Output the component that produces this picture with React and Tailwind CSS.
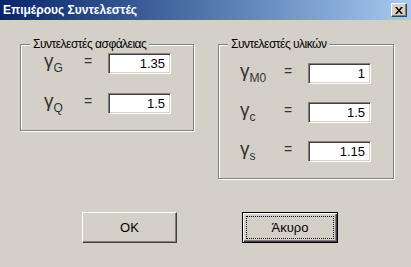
import React from 'react';

const font = { fontFamily: '"Liberation Sans", Arial, sans-serif' };

function Field({ value }) {
  return (
    <div className="w-[63px] h-[21px] bg-white border border-t-[#808080] border-l-[#808080] border-r-white border-b-white shadow-[inset_1px_1px_0_#404040,inset_-1px_-1px_0_#d4d0c8] flex items-center justify-end pr-[5px] text-[13px] text-black">
      {value}
    </div>
  );
}

function Row({ sub, value, wide }) {
  return (
    <div className="flex items-start h-[21px]">
      <div className={`${wide ? 'w-[44px]' : 'w-[40px]'} flex items-end text-[#333] leading-none mt-[-2px]`}>
        <span className="text-[19px]">γ</span>
        <span className="text-[12px] mb-[-4px]">{sub}</span>
      </div>
      <div className="w-[24px] text-[14px] text-[#333] leading-none pt-[1px]">=</div>
      <Field value={value} />
    </div>
  );
}

function Group({ title, children, className }) {
  return (
    <div className={`relative border border-[#808080] shadow-[inset_1px_1px_0_#fff,1px_1px_0_#fff] ${className}`}>
      <div className="absolute top-[-9px] left-[9px] px-[3px] bg-[#d4d0c8] text-[12px] tracking-[-0.5px] leading-[16px] text-black">
        {title}
      </div>
      {children}
    </div>
  );
}

export default function App() {
  return (
    <div className="w-[411px] h-[267px] bg-[#d4d0c8] flex flex-col overflow-hidden" style={font}>
      <div className="h-[20px] flex items-center justify-between pl-[3px] pr-[4px] bg-gradient-to-r from-[#0a246a] to-[#a6caf0]">
        <span className="text-white font-bold text-[12px]">Επιμέρους Συντελεστές</span>
        <div className="w-[16px] h-[14px] bg-[#d4d0c8] border border-t-white border-l-white border-r-[#404040] border-b-[#404040] shadow-[inset_-1px_-1px_0_#808080] flex items-center justify-center">
          <svg width="8" height="7" viewBox="0 0 8 7">
            <path d="M0 0h2l2 2.5L6 0h2L5 3.5 8 7H6L4 4.5 2 7H0l3-3.5z" fill="#000" />
          </svg>
        </div>
      </div>

      <div className="flex items-start pt-[24px] pl-[20px] gap-[24px]">
        <Group title="Συντελεστές ασφάλειας" className="w-[174px] h-[87px] pl-[23px] pt-[8px] flex flex-col gap-[19px]">
          <Row sub="G" value="1.35" />
          <Row sub="Q" value="1.5" />
        </Group>
        <Group title="Συντελεστές υλικών" className="w-[176px] h-[135px] pl-[21px] pt-[18px] flex flex-col gap-[18px]">
          <Row sub="M0" value="1" wide />
          <Row sub="c" value="1.5" wide />
          <Row sub="s" value="1.15" wide />
        </Group>
      </div>

      <div className="flex pl-[82px] gap-[65px] mt-[33px]">
        <button className="w-[95px] h-[31px] bg-[#d4d0c8] border border-t-white border-l-white border-r-[#404040] border-b-[#404040] shadow-[inset_-1px_-1px_0_#808080] text-[13px] text-black">
          OK
        </button>
        <button className="w-[96px] h-[31px] bg-[#d4d0c8] border border-black shadow-[inset_1px_1px_0_#fff,inset_-1px_-1px_0_#404040,inset_-2px_-2px_0_#808080] p-[3px]">
          <div className="w-full h-full border border-dotted border-black flex items-center justify-center text-[13px] text-black">
            Άκυρο
          </div>
        </button>
      </div>
    </div>
  );
}
